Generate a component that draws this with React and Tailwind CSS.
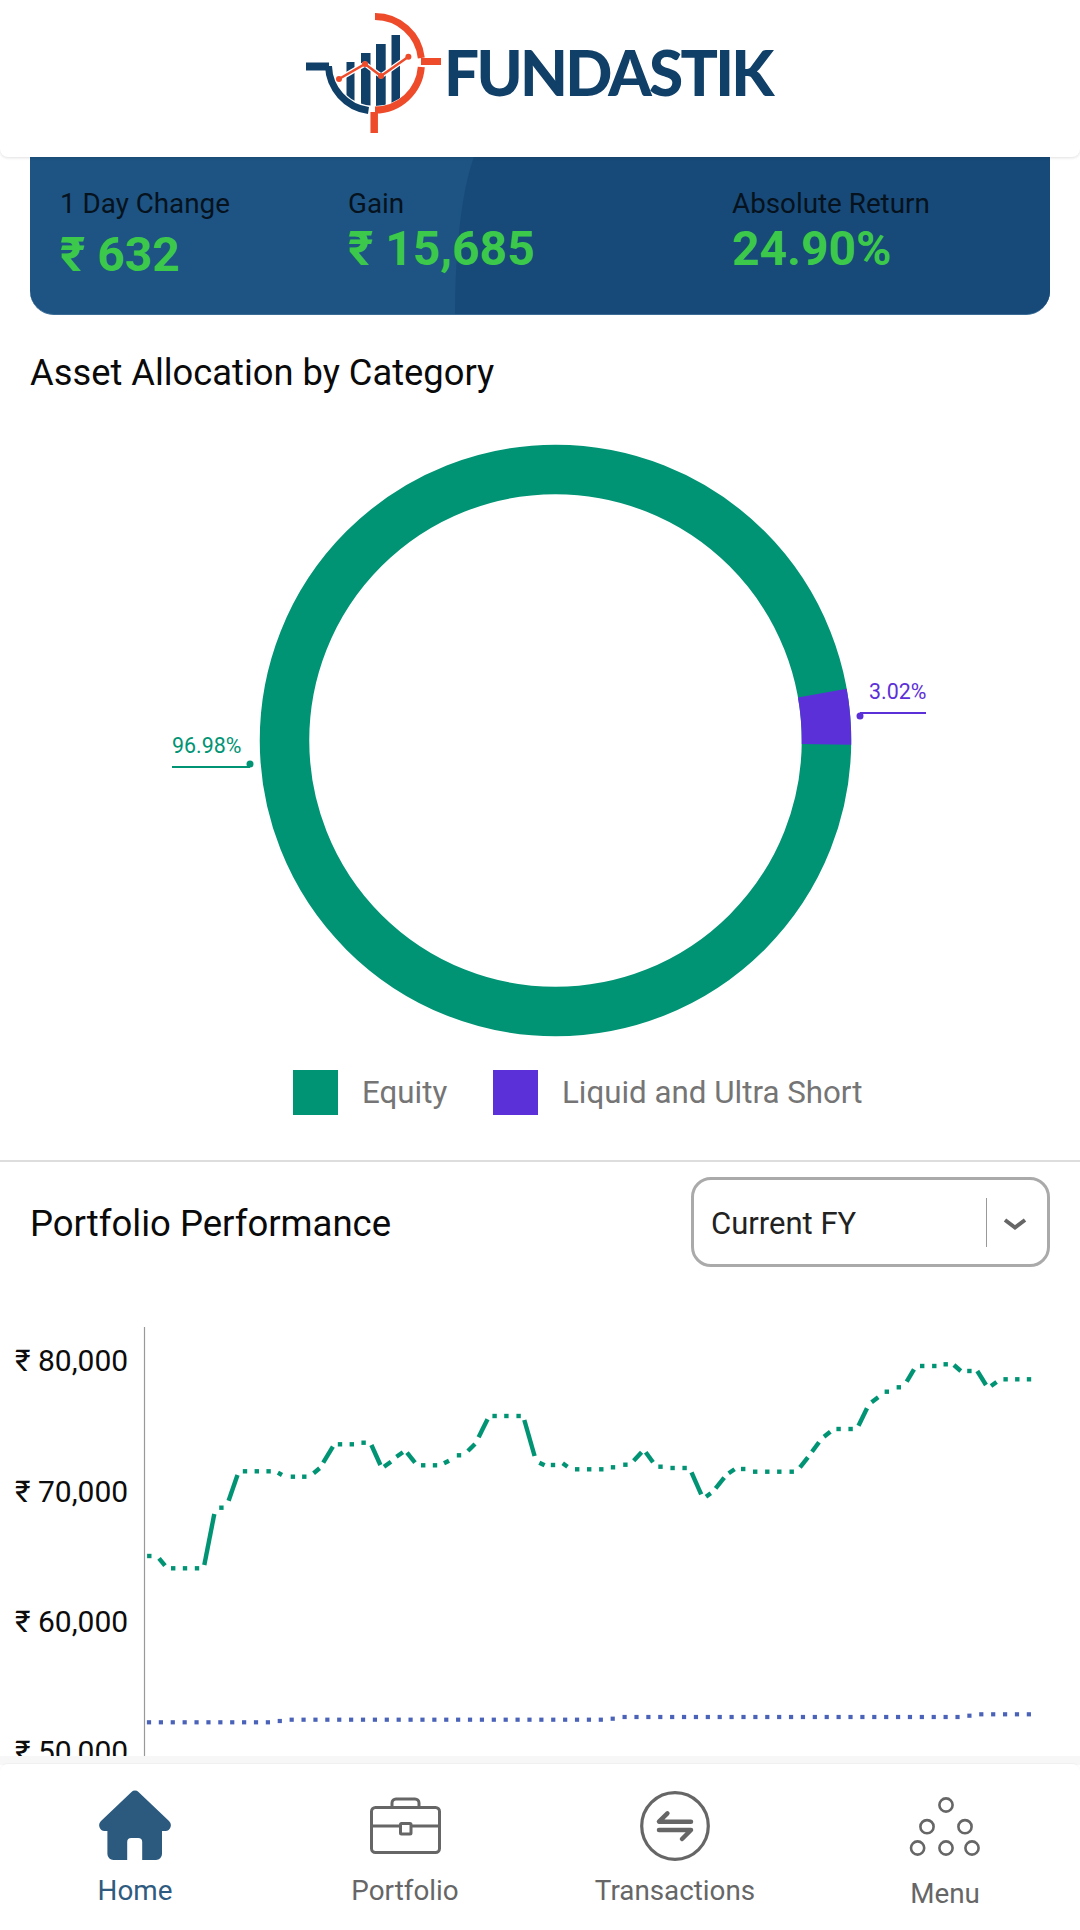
const dashes = [
[149.3,1556,2],[159,1558.3,165,1565.7],[173.2,1568.3,2],[185,1568.3,2],[197,1568.3,2],[204.3,1565,214.3,1514],[221.4,1507.7,2],[228.6,1500.7,237.5,1475],[245,1471.3,2],[256.8,1471.3,2],[268.6,1471.3,2],[277.9,1472.7,282,1475],[292.9,1476.7,2],[304.3,1476.7,2],[313.6,1473.3,319.6,1468.3],[323.2,1462.7,332.9,1446.7],[340,1444.3,2],[351.8,1444.3,2],[363.6,1442.7,2],[371.4,1445,380.4,1465],[384,1466.7,391,1461.7],[396.4,1456.7,402.9,1452.3],[407,1452.7,415,1462.7],[423.2,1465.3,2],[435,1465.3,2],[444,1463.3,449,1460.7],[459,1455.3,2],[467.9,1451,475,1444],[478.6,1437.3,487.5,1419.3],[494.6,1416,2],[506.4,1416,2],[518.6,1416,2],[524.3,1420,534.6,1456],[539.3,1462.7,544.6,1465.3],[553,1465,2],[562.7,1463.3,567.5,1466.7],[577.2,1469.3,2],[589.2,1469.3,2],[601.3,1469.3,2],[613,1467.3,2],[625.4,1464.7,2],[633.7,1460.7,641.6,1452.3],[645.7,1452.3,653,1462.3],[660.5,1466.7,2],[672.6,1468,2],[684.6,1468,2],[691.5,1472.3,701.2,1494.3],[706,1496.7,710.8,1493.3],[715.6,1488.3,724.2,1477.7],[728.7,1473.3,734.6,1469.3],[743.2,1469,2],[755.2,1471.7,2],[767.3,1471.7,2],[779.3,1471.7,2],[791.7,1471.7,2],[800,1467.3,807.9,1457.3],[812,1451.7,819,1442.3],[824,1436.7,830.3,1431.7],[838.6,1429,2],[850.6,1429,2],[858.5,1425.7,867,1408.3],[871.6,1402.3,878.2,1397.3],[886.8,1391.7,2],[898.8,1387.3,2],[906.7,1381.7,914,1369.3],[922.2,1366,2],[934.3,1366,2],[945.7,1364.3,2],[953.9,1365,960.8,1371],[969.4,1371,2],[977.3,1371,986,1385],[991,1386,996.6,1382],[1005.6,1379.3,2],[1017.3,1379.3,2],[1029,1379.3,2],
];

const blueY = (i) => (i <= 10 ? 1722.3 : i === 11 ? 1721 : i <= 38 ? 1719.7 : i === 39 ? 1718.7 : i <= 68 ? 1717 : i === 69 ? 1715.7 : 1714.3);
const blue = Array.from({ length: 75 }, (_, i) => ({ x: 149 + 11.89 * i, y: blueY(i) }));

function Logo() {
  return (
    <svg width="144" height="124" viewBox="300 12 144 124" className="shrink-0">
      <defs>
        <clipPath id="logoClip"><circle cx="375" cy="63" r="43" /></clipPath>
      </defs>
      <g fill="#103f68" clipPath="url(#logoClip)">
        <rect x="346.5" y="62" width="8" height="50" />
        <rect x="361" y="53" width="9.5" height="60" />
        <rect x="376" y="44" width="9.7" height="70" />
        <rect x="391.5" y="35" width="8.5" height="70" />
      </g>
      <path d="M306 66.5H329" stroke="#103f68" strokeWidth="8" fill="none" />
      <path d="M328.5 66 A46.5 46.5 0 0 0 368.5 110.5" stroke="#103f68" strokeWidth="7" fill="none" />
      <path d="M375 16.5 A46.5 46.5 0 0 1 421.3 58" stroke="#ee4b2b" strokeWidth="7" fill="none" />
      <path d="M421.3 67 A46.5 46.5 0 0 1 375 110" stroke="#ee4b2b" strokeWidth="7" fill="none" />
      <path d="M421 61.5H441" stroke="#ee4b2b" strokeWidth="7" fill="none" />
      <path d="M374.2 112V133" stroke="#ee4b2b" strokeWidth="7.5" fill="none" />
      <path d="M339 79L365 64L381 76L408.4 56.7" stroke="#ffffff" strokeWidth="5" fill="none" />
      <path d="M339 79L365 64L381 76L408.4 56.7" stroke="#ee4b2b" strokeWidth="2.5" fill="none" />
      <g fill="#ee4b2b">
        <circle cx="339" cy="79" r="3" />
        <circle cx="365" cy="64" r="3" />
        <circle cx="381" cy="76" r="3" />
        <circle cx="408.4" cy="56.7" r="3" />
      </g>
    </svg>
  );
}

function Stat({ label, value, width, shift }) {
  return (
    <div className={`flex flex-col ${width}`}>
      <span className="text-[27.8px] leading-[30px] text-[#06121d]">{label}</span>
      <span className={`text-[48px] leading-[54px] font-bold text-[#3cc84a] ${shift}`}>{value}</span>
    </div>
  );
}

function Donut() {
  const cx = 555.5, cy = 740.5, R = 271;
  const a0 = (-0.8 * Math.PI) / 180;
  const a1 = a0 + (10.87 * Math.PI) / 180;
  const x0 = cx + R * Math.cos(a0), y0 = cy - R * Math.sin(a0);
  const x1 = cx + R * Math.cos(a1), y1 = cy - R * Math.sin(a1);
  return (
    <svg width="1080" height="690" viewBox="0 405 1080 690" className="block shrink-0 mt-[12px]">
      <circle cx={cx} cy={cy} r={R} fill="none" stroke="#009474" strokeWidth="49.5" />
      <path d={`M${x0} ${y0} A${R} ${R} 0 0 0 ${x1} ${y1}`} fill="none" stroke="#5c30d8" strokeWidth="49.5" />
      <text x="172" y="753" fontSize="21.4" fill="#009474">96.98%</text>
      <path d="M172 767H250" stroke="#009474" strokeWidth="2" />
      <circle cx="250" cy="764" r="3.5" fill="#009474" />
      <text x="869" y="699" fontSize="21.4" fill="#5c30d8">3.02%</text>
      <path d="M860 713H926" stroke="#5c30d8" strokeWidth="2" />
      <circle cx="860" cy="716" r="3.5" fill="#5c30d8" />
    </svg>
  );
}

function Chart() {
  return (
    <svg width="1080" height="447" viewBox="0 1310 1080 447" className="block shrink-0">
      <path d="M144.5 1327V1757" stroke="#999999" strokeWidth="1.2" />
      {[["₹ 80,000", 1371], ["₹ 70,000", 1502], ["₹ 60,000", 1632], ["₹ 50,000", 1762]].map(([t, y]) => (
        <text key={t} x="15" y={y} fontSize="30" fill="#0c0c0c">{t}</text>
      ))}
      {dashes.map((d, i) =>
        d.length === 3 ? (
          <path key={i} d={`M${d[0] - 2.2} ${d[1]}H${d[0] + 2.2}`} stroke="#009474" strokeWidth="4.4" />
        ) : (
          <path key={i} d={`M${d[0]} ${d[1]}L${d[2]} ${d[3]}`} stroke="#009474" strokeWidth="4.4" />
        )
      )}
      {blue.map((p, i) => (
        <rect key={i} x={p.x - 2.1} y={p.y - 2.1} width="4.2" height="4.2" fill="#4a63b9" />
      ))}
    </svg>
  );
}

function NavItem({ icon, label, active, low }) {
  return (
    <div className="flex flex-col items-center">
      <div className="h-[87px] flex items-center justify-center">{icon}</div>
      <span className={`text-[27.8px] leading-[33px] ${low ? "mt-[8px]" : "mt-[5px]"} ${active ? "text-[#2f5b80]" : "text-[#666666]"}`}>{label}</span>
    </div>
  );
}

export default function App() {
  return (
    <div className="w-[1080px] h-[1930px] flex flex-col overflow-hidden bg-white font-['Roboto',sans-serif]">
      <header className="relative z-10 h-[157px] shrink-0 bg-white rounded-b-[8px] shadow-[0_1px_3px_rgba(0,0,0,0.12)] flex items-start pl-[300px] pt-[12px]">
        <Logo />
        <span className="font-['Lato',sans-serif] font-black text-[62px] leading-[74px] mt-[23px] text-[#103f68] tracking-[-2.7px]">FUNDASTIK</span>
      </header>
      <main className="flex-1 min-h-0 overflow-hidden flex flex-col">
        <section className="relative mx-[30px] h-[158px] shrink-0 rounded-b-[24px] overflow-hidden bg-[#1d5483] border-b border-[#3a6c96]">
          <div className="absolute top-[-20px] bottom-0 left-[425px] right-0 bg-[#174a78] rounded-tl-[60px_300px]" />
          <div className="relative flex pl-[30px] pt-[32px]">
            <Stat label="1 Day Change" value="₹ 632" width="w-[288px]" shift="mt-[9px]" />
            <Stat label="Gain" value="₹ 15,685" width="w-[384px]" shift="mt-[3px]" />
            <Stat label="Absolute Return" value="24.90%" width="w-[270px]" shift="mt-[3px]" />
          </div>
        </section>
        <h2 className="ml-[30px] mt-[38px] text-[36.3px] leading-[40px] text-[#0a0a0a] font-normal">Asset Allocation by Category</h2>
        <Donut />
        <div className="relative flex h-[45px] shrink-0 items-center pl-[293px] -mt-[25px]">
          <span className="w-[45px] h-[45px] bg-[#009474]" />
          <span className="ml-[24px] w-[131px] text-[31.3px] leading-[36px] text-[#757575]">Equity</span>
          <span className="w-[45px] h-[45px] bg-[#5c30d8]" />
          <span className="ml-[24px] text-[31.3px] leading-[36px] text-[#757575]">Liquid and Ultra Short</span>
        </div>
        <div className="mt-[45px] h-[2px] shrink-0 bg-[#dddddd]" />
        <div className="flex shrink-0 items-center justify-between pl-[30px] pr-[30px] pt-[15px]">
          <h2 className="text-[36.5px] leading-[40px] pt-[4px] text-[#0a0a0a] font-normal">Portfolio Performance</h2>
          <div className="w-[359px] h-[90px] rounded-[20px] border-[3px] border-[#aaaaaa] flex items-center pl-[17px]">
            <span className="w-[275px] pt-[4px] text-[31px] leading-[36px] text-[#222222]">Current FY</span>
            <span className="w-px h-[49px] bg-[#999999]" />
            <svg width="26" height="14" viewBox="0 0 26 14" className="ml-[15px] mt-[4px]">
              <path d="M3 3L13 10.5L23 3" fill="none" stroke="#666666" strokeWidth="4" />
            </svg>
          </div>
        </div>
        <div className="mt-[43px]"><Chart /></div>
      </main>
      <div className="h-[9px] shrink-0 bg-[#f7f7f7] relative z-10" />
      <nav className="relative z-10 -mt-[1px] h-[166px] shrink-0 bg-white rounded-t-[8px] grid grid-cols-4 pt-[18px] shadow-[0_-1px_1px_rgba(0,0,0,0.03)]">
        <NavItem
          active
          label="Home"
          icon={
            <svg width="72" height="71" viewBox="0 0 72 71">
              <path fill="#2c5a7e" d="M32.5 2a5 5 0 0 1 7 0L70 31a5.8 5.8 0 0 1-3.5 10H63V64a6 6 0 0 1-6 6H43.2V52a4 4 0 0 0-4-4h-7a4 4 0 0 0-4 4V70H14.4a6 6 0 0 1-6-6V41H5.5A5.8 5.8 0 0 1 2 31z" />
            </svg>
          }
        />
        <NavItem
          label="Portfolio"
          icon={
            <svg width="71" height="57" viewBox="0 0 71 57" fill="none" stroke="#666666" strokeWidth="3">
              <rect x="1.5" y="10.5" width="68" height="45" rx="4" />
              <path d="M22 10V6a4 4 0 0 1 4-4h19a4 4 0 0 1 4 4v4" />
              <path d="M2 29H30M41.5 29H69" />
              <rect x="30.5" y="26.5" width="10.5" height="10.5" rx="1" />
            </svg>
          }
        />
        <NavItem
          label="Transactions"
          icon={
            <svg width="70" height="70" viewBox="0 0 70 70" fill="none" stroke="#666666">
              <circle cx="35" cy="35" r="33.3" strokeWidth="3.2" />
              <path d="M27.4 22.3L19 30.7H51M19 39H51L42 48" strokeWidth="4.5" strokeLinecap="round" strokeLinejoin="round" />
            </svg>
          }
        />
        <NavItem
          low
          label="Menu"
          icon={
            <svg width="72" height="60" viewBox="0 0 72 60" fill="none" stroke="#666666" strokeWidth="2.6">
              <circle cx="37" cy="9" r="6.6" />
              <circle cx="18" cy="30.7" r="6.6" />
              <circle cx="56" cy="30.7" r="6.6" />
              <circle cx="8.6" cy="52" r="6.6" />
              <circle cx="37" cy="52" r="6.6" />
              <circle cx="63" cy="52" r="6.6" />
            </svg>
          }
        />
      </nav>
    </div>
  );
}
